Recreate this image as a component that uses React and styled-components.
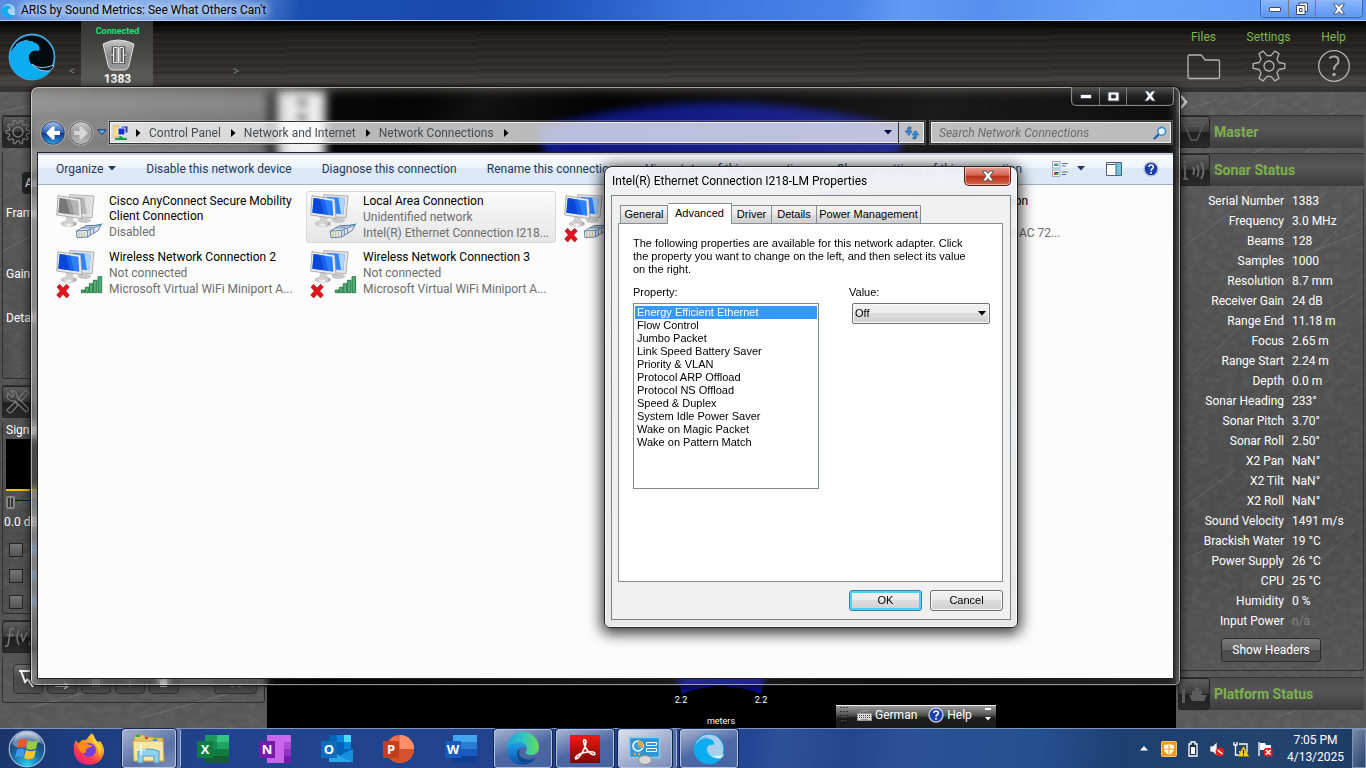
import React from "react";
import styled, { createGlobalStyle, css } from "styled-components";

const UI = `Roboto, "Open Sans", sans-serif`;
const DLG = `"Liberation Sans", Arial, sans-serif`;

const Global = createGlobalStyle`
  *, *::before, *::after { box-sizing: border-box; }
  body { margin: 0; font-family: ${UI}; font-size: 12px; line-height: 16px; color: #000; overflow: hidden; }
  button, input, select { font: inherit; color: inherit; margin: 0; }
  button { padding: 0; border: 0; background: none; }
  svg { display: block; flex: none; }
`;

const Desktop = styled.div`
  position: relative;
  height: 100vh;
  display: flex;
  flex-direction: column;
  background: #000;
  overflow: hidden;
`;

/* ---------- main application ---------- */

const TitleBar = styled.header`
  display: flex;
  justify-content: space-between;
  height: 21px;
  flex: none;
  padding-left: 1px;
  border-bottom: 1px solid #b4cdf5;
  background: linear-gradient(100deg, #5a8ade 0, #85ace8 10%, #6a96e0 17%, #1c4fb2 22%, #1a49ad 35%, #2258bf 42%, #3b74dc 50%, #4a84e8 62%, #6199f5 66%, #568fef 72%, #66a1fa 82%, #5c96f5 100%);
`;
const TitleText = styled.h1`
  display: flex;
  align-items: center;
  gap: 5px;
  margin: 0;
  font-size: 12px;
  font-weight: 400;
  text-shadow: 0 0 6px #cfe0fb, 0 0 8px #cfe0fb, 0 0 10px #cfe0fb, 0 0 12px #b5cdf6;
`;
const Caption = styled.div`
  display: flex;
  height: ${(p) => (p.$dark ? 19 : 18)}px;
  margin-right: ${(p) => (p.$dark ? 0 : 3)}px;
  border: 1px solid ${(p) => (p.$dark ? "#8b8b8b" : "#3765ae")};
  border-top: 0;
  border-radius: 0 0 5px 5px;
  box-shadow: inset 0 0 1px ${(p) => (p.$dark ? "#999" : "#d8e8ff")};
  background: ${(p) => (p.$dark ? "linear-gradient(#555, #222 50%, #111)" : "linear-gradient(#8ab6fb, #5d97f3)")};
`;
const CaptionButton = styled.button`
  display: grid;
  place-items: center;
  width: ${(p) => (p.$wide ? 47 : 27)}px;
  & + & { border-left: 1px solid ${(p) => (p.$dark ? "#777" : "#a5c6fa")}; }
`;

const AppHeader = styled.div`
  display: flex;
  justify-content: space-between;
  height: 71px;
  flex: none;
  background:
    repeating-linear-gradient(179.7deg, rgba(255,255,255,.035) 0 1px, transparent 1px 3px, rgba(0,0,0,.15) 3px 4px, transparent 4px 7px),
    linear-gradient(#000 0, #22211f 22%, #2c2b28 50%, #33322f 72%, #484742 84%, #3f3e3a 92%, #2e2d2a 100%);
`;
const HeaderLeft = styled.div`
  display: flex;
  padding-left: 8px;
`;
const LogoBox = styled.div`
  width: 48px;
  padding-top: 12px;
`;
const Arrow = styled.button`
  width: ${(p) => p.$w}px;
  padding-top: 43px;
  color: #777;
  font-size: 12px;
  line-height: 14px;
  text-align: right;
  align-self: flex-start;
  padding-right: 6px;
`;
const DeviceTile = styled.button`
  display: flex;
  flex-direction: column;
  align-items: center;
  width: 72px;
  height: 65px;
  padding: 4px 0 0 1px;
  background: linear-gradient(#333 0, #4d4d4b 60%, #62625f 100%);
  color: #fff;
  font-weight: 700;
  line-height: 14px;
`;
const Connected = styled.span`
  color: #1ee070;
  font-size: 9px;
  line-height: 13px;
`;
const HeaderMenu = styled.nav`
  display: flex;
  padding-top: 8px;
`;
const MenuEntry = styled.button`
  display: flex;
  flex-direction: column;
  align-items: center;
  align-self: flex-start;
  gap: 5px;
  width: 65px;
  color: #7fb64c;
`;

const AppBody = styled.div`
  display: flex;
  flex: 1;
  min-height: 0;
  overflow: hidden;
`;
const SidePanel = styled.aside`
  position: relative;
  width: ${(p) => p.$w}px;
  flex: none;
  padding: 23px 2px 0;
  color: #fff;
  background: linear-gradient(#5a5a5a, #505050 40%, #4c4c4c 70%, #585858);
`;
const Texture = styled.svg`
  position: absolute;
  inset: 0;
  width: 100%;
  height: 100%;
`;
const Expander = styled.button`
  position: absolute;
  left: 4px;
  top: 3px;
`;
const SectionBar = styled.button`
  position: relative;
  display: flex;
  align-items: center;
  gap: 4px;
  width: 100%;
  height: 33px;
  border-top: 1px solid #333;
  background: linear-gradient(#4c4c4c, #565656 40%, #3c3c3c);
  color: #7fb04f;
  font-size: 14px;
  font-weight: 700;
`;
const SectionIcon = styled.span`
  display: grid;
  place-items: center;
  width: 32px;
  height: 32px;
  border: 1px solid #222;
  border-radius: 3px;
  background: linear-gradient(#5d5d5d, #3c3c3c 48%, #1f1f1f 52%, #2b2b2b);
`;
const SectionBody = styled.div`
  position: relative;
  height: ${(p) => p.$h}px;
  margin: 3px 0 6px;
  padding: ${(p) => p.$pad || "0"};
  border: 1px solid #303030;
  border-top-color: transparent;
  border-radius: 3px;
  overflow: hidden;
`;
const StatusTable = styled.table`
  position: relative;
  width: 100%;
  border-collapse: collapse;
  th, td { height: 20px; padding: 0; line-height: 16px; font-weight: 400; white-space: nowrap; }
  th { width: 105px; text-align: right; }
  td { padding-left: 8px; color: #fff; }
  tr:last-child td { color: #858585; }
`;
const ShowHeaders = styled.button`
  display: block;
  width: 100px;
  height: 24px;
  margin: 7px 0 0 42px;
  border: 1px solid #2c2c2c;
  border-radius: 3px;
  background: linear-gradient(#7a7a7a, #626262 48%, #4b4b4b 52%, #505050);
`;
const SpacerBar = styled.div`
  height: ${(p) => p.$h}px;
`;

const FieldLabel = styled.label`
  display: block;
  padding: ${(p) => p.$pad};
  white-space: nowrap;
`;
const AutoButton = styled.button`
  display: block;
  width: 80px;
  height: 22px;
  margin: 20px 0 0 19px;
  padding-left: 3px;
  border-radius: 4px;
  background: #242424;
  text-align: left;
`;
const SignalPlot = styled.div`
  width: 248px;
  height: 52px;
  margin-left: 3px;
  border-bottom: 2px solid #e8c400;
  background: linear-gradient(90deg, #000, #222);
`;
const Threshold = styled.input`
  display: block;
  appearance: none;
  width: 248px;
  height: 14px;
  margin: 4px 0 4px 3px;
  background: linear-gradient(transparent 5px, #111 5px 6px, #2d5fc0 6px 7px, transparent 7px);
  &::-webkit-slider-thumb {
    appearance: none;
    width: 9px;
    height: 13px;
    border: 2px solid #858585;
    border-radius: 2px;
    background: linear-gradient(90deg, #333 2px, #999 2px 3px, #333 3px);
  }
`;
const CheckRow = styled.label`
  display: flex;
  align-items: center;
  gap: 7px;
  height: 26px;
  padding-left: 6px;
  color: #5fa8ff;
`;
const DarkCheck = styled.input`
  appearance: none;
  width: 14px;
  height: 14px;
  border: 1px solid #222;
  background: linear-gradient(#777, #555);
`;
const ToolRow = styled.div`
  display: flex;
  gap: 4px;
`;
const ToolButton = styled.button`
  display: grid;
  place-items: center;
  width: ${(p) => p.$w || 30}px;
  height: 30px;
  margin-left: ${(p) => p.$ml || 0}px;
  border: 1px solid #333;
  border-radius: 4px;
  background: linear-gradient(#6a6a6a, #4b4b4b 50%, #4f4f4f);
`;
const SonarView = styled.main`
  position: relative;
  flex: 1;
  min-width: 0;
  background: #000;
`;
const ViewTools = styled.div`
  display: flex;
  flex-direction: column;
  align-items: center;
  gap: 8px;
  width: 49px;
  height: 90px;
  margin-left: 10px;
  padding-top: 7px;
  background: linear-gradient(90deg, #bcbcbc, #efefef 30%, #efefef 80%, #bbb);
`;
const ToolDot = styled.button`
  width: 10px;
  height: 7px;
  border-radius: 4px;
  background: #444;
`;
const SonarChart = styled.svg`
  position: absolute;
  left: 0;
  top: 0;
  width: 100%;
  height: 100%;
`;

/* ---------- explorer window ---------- */

const ExplorerWindow = styled.section`
  position: absolute;
  left: 30px;
  right: 185px;
  top: 86px;
  bottom: 82px;
  display: flex;
  flex-direction: column;
  padding: 0 6px 6px;
  border: 1px solid #161616;
  border-radius: 8px 8px 6px 6px;
  box-shadow: inset 0 0 0 1px rgba(255,255,255,.55), 0 0 8px 1px rgba(0,0,0,.6);
  backdrop-filter: blur(4px);
  background: linear-gradient(115deg, rgba(255,255,255,.34) 0, rgba(255,255,255,.25) 17%, rgba(255,255,255,.03) 22%, rgba(255,255,255,.02) 28%, rgba(255,255,255,.07) 32%, rgba(255,255,255,.01) 40%, rgba(255,255,255,.1) 64%, rgba(255,255,255,.06) 80%, rgba(255,255,255,.14));
`;
const WindowTop = styled.div`
  display: flex;
  justify-content: flex-end;
  height: 34px;
`;
const AddressRow = styled.div`
  display: flex;
  align-items: center;
  height: 23px;
  margin-bottom: 8px;
  padding-left: 3px;
`;
const NavButton = styled.button`
  width: 28px;
  height: 26px;
`;
const NavMenu = styled.button`
  width: 12px;
  margin-right: 1px;
  padding-left: 1px;
`;
const Glass = css`
  display: flex;
  align-items: center;
  height: 23px;
  border: 1px solid #333;
  box-shadow: inset 0 0 0 1px rgba(255,255,255,.75), 0 0 0 1px rgba(255,255,255,.25);
  background: rgba(255,255,255,.72);
`;
const AddressBox = styled.div`
  ${Glass}
  flex: 1;
  min-width: 0;
  padding-left: 3px;
  color: #454c52;
  svg + svg { margin-left: 7px; }
`;
const Crumb = styled.a`
  margin: 0 10px 0 8px;
  color: inherit;
  text-decoration: none;
  white-space: nowrap;
`;
const AddressEnd = styled.span`
  display: flex;
  align-items: center;
  gap: 6px;
  margin-left: auto;
`;
const Refresh = styled.button`
  display: grid;
  place-items: center;
  width: 26px;
  height: 21px;
  border-left: 1px solid #333;
`;
const SearchBox = styled.label`
  ${Glass}
  width: 242px;
  margin-left: 5px;
  margin-right: 2px;
  padding: 0 4px 0 8px;
`;
const SearchInput = styled.input`
  flex: 1;
  min-width: 0;
  padding: 0;
  border: 0;
  outline: 0;
  background: none;
  font-style: italic;
  &::placeholder { color: #6b6b6b; opacity: 1; }
`;
const Client = styled.div`
  flex: 1;
  display: flex;
  flex-direction: column;
  min-height: 0;
  border: 1px solid #222;
  background: #fcfcfc;
`;
const Toolbar = styled.div`
  display: flex;
  align-items: center;
  gap: 30px;
  height: 32px;
  flex: none;
  padding: 0 15px 0 18px;
  border-bottom: 1px solid #a0afc3;
  background: linear-gradient(#fafcff 0, #eef4fc 48%, #dce8f6 50%, #dde9f7 100%);
  box-shadow: inset 0 2px 0 #c5c9dd;
  color: #1e395b;
`;
const ToolbarButton = styled.button`
  display: flex;
  align-items: center;
  gap: ${(p) => p.$gap || 5}px;
  white-space: nowrap;
`;
const ToolbarIcons = styled.div`
  display: flex;
  align-items: center;
  gap: 21px;
  margin-left: auto;
`;
const ItemGrid = styled.div`
  display: grid;
  grid-template-columns: repeat(auto-fill, 250px);
  gap: 4px;
  padding: 6px 0 0 14px;
`;
const Item = styled.div`
  display: flex;
  gap: 4px;
  height: 52px;
  padding: 1px 2px 0 2px;
  border: 1px solid ${(p) => (p.$selected ? "#d9d9d9" : "transparent")};
  border-radius: 3px;
  background: ${(p) => (p.$selected ? "linear-gradient(#fafafa, #e6e6e6)" : "none")};
`;
const ItemText = styled.div`
  min-width: 0;
  padding-top: 1px;
  color: #6d6d6d;
  p { min-height: 16px; margin: 0; white-space: nowrap; }
`;
const ItemName = styled.div`
  color: #000;
  line-height: 15px;
`;

/* ---------- properties dialog ---------- */

const Dialog = styled.section`
  position: absolute;
  left: 604px;
  top: 166px;
  width: 414px;
  padding: 0 6px 7px;
  border: 1px solid #222;
  border-radius: 8px 8px 6px 6px;
  background: linear-gradient(rgba(245,247,250,.86), rgba(235,237,240,.8) 30px, rgba(228,228,228,.85));
  backdrop-filter: blur(5px);
  box-shadow: inset 0 0 0 1px rgba(255,255,255,.85), 0 3px 14px 3px rgba(0,0,0,.75);
`;
const DialogTitle = styled.div`
  display: flex;
  justify-content: space-between;
  height: 28px;
  h2 { margin: 0; padding: 6px 0 0 1px; font-size: 12px; font-weight: 400; line-height: 16px; }
`;
const CloseButton = styled.button`
  display: grid;
  place-items: center;
  width: 47px;
  height: 19px;
  border: 1px solid #5a1a14;
  border-top: 0;
  border-radius: 0 0 5px 5px;
  box-shadow: inset 0 0 0 1px rgba(255,255,255,.45);
  background: linear-gradient(#e9a399, #d4604f 46%, #b9301c 50%, #cf5a3e 90%, #e08a62);
`;
const DialogClient = styled.div`
  padding: 7px 7px 8px 6px;
  border: 1px solid #808080;
  background: #f0f0f0;
  font-family: ${DLG};
  font-size: 11px;
  line-height: 13px;
`;
const Tabs = styled.div`
  display: flex;
  align-items: flex-end;
  padding-left: 2px;
`;
const Tab = styled.button`
  height: ${(p) => (p.$active ? 21 : 18)}px;
  width: ${(p) => p.$w}px;
  margin-bottom: ${(p) => (p.$active ? -1 : 0)}px;
  padding-bottom: ${(p) => (p.$active ? 2 : 0)}px;
  position: relative;
  border: 1px solid #898c95;
  border-bottom: 0;
  background: ${(p) => (p.$active ? "#fff" : "linear-gradient(#f2f2f2, #ebebeb 50%, #ddd 52%, #d0d0d0)")};
  white-space: nowrap;
  & + & { border-left-width: ${(p) => (p.$active ? 1 : 0)}px; }
`;
const TabPage = styled.div`
  height: 359px;
  padding: 13px 11px 0 14px;
  border: 1px solid #898c95;
  background: #fff;
  p { width: 344px; margin: 0 0 10px; }
`;
const Columns = styled.div`
  display: flex;
  gap: 30px;
`;
const Field = styled.div`
  display: flex;
  flex-direction: column;
  gap: 4px;
  width: ${(p) => p.$w}px;
`;
const PropertyList = styled.select`
  width: 186px;
  height: 186px;
  padding: 2px 1px 1px;
  border: 1px solid #828790;
  border-radius: 0;
  outline: 0;
  background: #fff;
  overflow: hidden;
  font-size: 11px;
  option { height: 13px; min-height: 13px; padding: 0 2px; line-height: 13px; color: #000; }
  option:checked { background: linear-gradient(#39f, #39f); color: #fff; }
`;
const Combo = styled.div`
  display: grid;
  align-items: center;
  margin-left: 3px;
  & > * { grid-area: 1 / 1; }
  svg { justify-self: end; margin-right: 4px; pointer-events: none; }
`;
const ComboSelect = styled.select`
  appearance: none;
  width: 138px;
  height: 21px;
  padding: 0 2px;
  border: 1px solid #707070;
  border-radius: 2px;
  box-shadow: inset 0 0 0 1px #fafafa;
  background: linear-gradient(#f2f2f2, #ebebeb 48%, #ddd 50%, #cfcfcf);
`;
const DialogButtons = styled.div`
  display: flex;
  justify-content: flex-end;
  gap: 8px;
  margin-top: 8px;
`;
const PushButton = styled.button`
  width: 73px;
  height: 21px;
  border: 1px solid ${(p) => (p.$primary ? "#3c7fb1" : "#707070")};
  border-radius: 3px;
  box-shadow: inset 0 0 0 ${(p) => (p.$primary ? "2px #4fd0f6" : "1px #fafafa")};
  background: linear-gradient(#f2f2f2, #ebebeb 48%, #ddd 50%, #cfcfcf);
`;

/* ---------- language bar and task bar ---------- */

const LanguageBar = styled.div`
  position: absolute;
  right: 370px;
  bottom: 40px;
  display: flex;
  align-items: center;
  width: 160px;
  height: 23px;
  padding: 0 4px 4px;
  border-top: 1px solid #eee;
  background: linear-gradient(#999, #555 40%, #1e1e1e 55%, #1a1a1a);
  color: #fff;
`;
const LanguageButton = styled.button`
  display: flex;
  align-items: center;
  gap: 3px;
  margin-left: ${(p) => p.$ml}px;
`;
const Taskbar = styled.footer`
  display: flex;
  height: 40px;
  flex: none;
  border-top: 1px solid #8195b8;
  background: linear-gradient(100deg, #1b3568 0, #1d3c7c 5%, #21428c 15%, #22438e 52%, #234795 55%, #2d5199 57%, #24468f 62%, #2a5198 66%, #24508f 76%, #1d3f70 82%, #24446f 92%, #1c3a66 100%);
  color: #fff;
`;
const TaskButtons = styled.div`
  display: flex;
  gap: 4px;
  align-items: stretch;
`;
const StartButton = styled.button`
  width: 56px;
  padding-left: 8px;
`;
const TaskButton = styled.button`
  display: flex;
  align-items: center;
  justify-content: center;
  width: 58px;
  height: 39px;
  ${(p) => p.$open && css`
    border: 1px solid #b5c2dd;
    border-radius: 3px;
    box-shadow: 0 0 0 1px #14264d;
    background: linear-gradient(160deg, rgba(255,255,255,.6), rgba(255,255,255,.2) 50%, rgba(255,255,255,.16));
  `}
  ${(p) => p.$stacked && css`
    width: 54px;
    margin-right: 4px;
    background: linear-gradient(150deg, rgba(255,255,255,${p.$active ? ".85" : ".6"}), rgba(255,255,255,${p.$active ? ".55" : ".25"}) 60%, rgba(255,255,255,.4));
    box-shadow: 0 0 0 1px #14264d, 4px 0 0 0 #5570a8, 5px 0 0 0 #a9b7d4;
  `}
`;
const Tray = styled.div`
  display: flex;
  align-items: center;
  margin-left: auto;
`;
const TrayIcons = styled.div`
  display: flex;
  align-items: center;
  gap: 8px;
  margin-right: 6px;
`;
const TrayToggle = styled.button`
  padding-right: 5px;
`;
const Clock = styled.time`
  width: 73px;
  text-align: center;
  line-height: 17px;
  padding-top: 1px;
`;
const ShowDesktop = styled.button`
  width: 14px;
  height: 39px;
  border: 1px solid #7e93ba;
  background: linear-gradient(120deg, rgba(255,255,255,.4), rgba(255,255,255,.05));
`;

/* ---------- drawings ---------- */

const WaveLogo = ({ size, pale }) => (
  <svg width={size} height={size} viewBox="0 0 48 48">
    <circle cx="24" cy="24" r="22.5" fill={pale ? "#a9cfee" : "#050a10"} stroke={pale ? "#1590d8" : "#3fa7dd"} strokeWidth="1.8" />
    <path d="M2 21C6 11 17 7 25 9C30 10 33 14 31 18C25 16 20 20 21 26C22 33 31 37 45 34C42 42 32 47 23 46C10 45 0 35 2 21Z" fill="#0badf0" />
    <path d="M24 31C30 36 38 35 46 32C45 35 43 38 40 38C33 38 28 36 24 31Z" fill={pale ? "#e6f6ff" : "#071018"} stroke="#9adcf8" strokeWidth=".9" />
    <path d="M5 17C10 9 18 7 25 9M8 12C13 8 17 8 20 7" stroke="#35a8e3" strokeWidth="1.200" fill="none" />
  </svg>
);
const Min = ({ s = "#444a58" }) => <svg width="14" height="8" viewBox="0 0 14 8"><rect x="1.5" y="2.5" width="11" height="4" rx=".5" fill="#fff" stroke={s} /></svg>;
const Max = ({ s = "#444a58" }) => <svg width="13" height="11" viewBox="0 0 13 11"><path d="M1 1H12V10H1ZM4.500 4V7H8.500V4Z" fill="#fff" fillRule="evenodd" stroke={s} /></svg>;
const Restore = () => (
  <svg width="14" height="14" viewBox="0 0 14 14">
    <path d="M4 1H12.500V9.500H4Z" fill="#fff" stroke="#3c4a60" />
    <path d="M1.500 3.500H10V12.500H1.500ZM4.500 6.500V9.500H7V6.500Z" fill="#fff" fillRule="evenodd" stroke="#3c4a60" />
  </svg>
);
const Cross = ({ s = "#444a58" }) => <svg width="14" height="12" viewBox="0 0 14 12"><path d="M1.500 1H5L7 3.500 9 1H12.500L9 6 12.500 11H9L7 8.500 5 11H1.500L5 6Z" fill="#fff" stroke={s} strokeWidth=".9" /></svg>;
const Down = ({ fill = "#1e395b", w = 8, h = 5 }) => <svg width={w} height={h} viewBox="0 0 8 5"><path d="M0 0H8L4 4.500Z" fill={fill} /></svg>;
const Right = () => <svg width="5" height="8" viewBox="0 0 5 8"><path d="M0 0 4.500 4 0 8Z" fill="#000" /></svg>;

const DeviceIcon = () => (
  <svg width="36" height="34" viewBox="0 0 36 34">
    <defs><linearGradient id="dev" x2="0" y2="1"><stop stopColor="#c8c8c8" /><stop offset=".5" stopColor="#8a8a8a" /><stop offset="1" stopColor="#999" /></linearGradient></defs>
    <path d="M3 6Q18 -2 34 6L29 27Q28 32 24 32H13Q9 32 8 27Z" fill="url(#dev)" stroke="#ddd" />
    <path d="M13 9.500H16.500V24.500H13ZM20.500 9.500H24V24.500H20.500ZM16.500 11V23M20.500 11V23M10 17H13M24 17H27" fill="none" stroke="#555" strokeWidth="2.600" />
    <path d="M13.500 9.500H17V24.500H13.500ZM20 9.500H23.500V24.500H20ZM18.500 9V25M10 17H13.500M23.500 17H27" fill="none" stroke="#eee" strokeWidth="1" />
  </svg>
);
const gearPath = (cx, cy, n, rOut, rIn, tip, root) => {
  const pts = [];
  for (let i = 0; i < n; i++) {
    const a = (i * 2 * Math.PI) / n;
    [[-root, rIn], [-tip, rOut], [tip, rOut], [root, rIn]].forEach(([d, r]) => {
      pts.push(`${(cx + r * Math.cos(a + d)).toFixed(1)} ${(cy + r * Math.sin(a + d)).toFixed(1)}`);
    });
  }
  return `M${pts.join("L")}Z`;
};
const FolderOutline = () => <svg width="34" height="32" viewBox="0 0 34 32"><path d="M2 5Q1 5 1 7V26Q1 28.500 2.500 28.500H31Q32.500 28.500 32.500 27V11Q32.500 10 31 10H18L15 6Q14.500 5 13 5Z" fill="none" stroke="#b4b4b0" strokeWidth="1.300" /></svg>;
const GearOutline = () => <svg width="34" height="32" viewBox="0 0 34 32"><path d={gearPath(17, 16, 6, 16, 10.500, 0.15, 0.34)} fill="none" stroke="#b4b4b0" strokeWidth="1.300" strokeLinejoin="round" /><circle cx="17" cy="16" r="5" fill="none" stroke="#b4b4b0" strokeWidth="1.300" /></svg>;
const HelpOutline = () => <svg width="32" height="32" viewBox="0 0 32 32"><circle cx="16" cy="16" r="15.300" fill="none" stroke="#b4b4b0" strokeWidth="1.300" /><path d="M11.500 8.500Q12.500 6.500 16 6.500Q20.500 6.500 20.500 11Q20.500 13.500 18 15Q16 16.500 16 20" fill="none" stroke="#a8a8a4" strokeWidth="2" /><circle cx="16" cy="24.500" r="1.800" fill="#a8a8a4" /></svg>;

const Scratches = () => (
  <Texture preserveAspectRatio="none" viewBox="0 0 190 640" aria-hidden="true">
    <filter id="grain"><feTurbulence type="fractalNoise" baseFrequency=".12 .16" numOctaves="4" seed="4" /><feColorMatrix values="0 0 0 0 1 0 0 0 0 1 0 0 0 0 1 .9 0 0 0 -.32" /></filter>
    <rect width="190" height="640" filter="url(#grain)" opacity=".13" />
    <path d="M0 20L40 8M5 60L90 6M20 90L160 20M60 110L110 60M2 160L70 110M30 220L150 100M10 290L180 120M90 180L186 140M120 240L185 200M60 330L170 250M5 420L60 380M10 470L90 430M110 500L180 440M130 60L178 34M150 75L180 80M20 620L100 590M100 630L186 596" stroke="#fff" strokeWidth=".7" opacity=".17" fill="none" />
  </Texture>
);
const FilterIcon = () => <svg width="26" height="22" viewBox="0 0 26 22"><path d="M3 2H23L16 19H10ZM4.500 5H21.500" fill="none" stroke="#5c5c5c" strokeWidth="1.500" /></svg>;
const SignalIcon = () => <svg width="26" height="22" viewBox="0 0 26 22"><path d="M4 7V20M2 7H5M2 20H7M12 8Q14 12 12 16M16 6Q19 12 16 18M20 3Q25 12 20 20" fill="none" stroke="#6a6a6a" strokeWidth="2" /><circle cx="4" cy="3" r="1.500" fill="#6a6a6a" /></svg>;
const ShipIcon = () => <svg width="28" height="22" viewBox="0 0 28 22"><circle cx="4" cy="2" r="1.800" fill="#5c5c5c" /><path d="M2 6H5V20H2ZM9 12H27L24 18H12ZM12 8H22V12H12ZM15 5H19V8H15ZM16.500 2H17.500V5H16.500Z" fill="#5c5c5c" /></svg>;
const SmallGear = () => <svg width="26" height="26" viewBox="0 0 26 26"><path d={gearPath(13, 13, 10, 12, 9, 0.1, 0.2)} fill="none" stroke="#777" strokeWidth="1.300" /><circle cx="13" cy="13" r="5" fill="none" stroke="#777" strokeWidth="1.500" /></svg>;
const WrenchIcon = () => <svg width="26" height="26" viewBox="0 0 26 26"><path d="M3 4L7 8 9 6 6 2Q11 1 12 6V8L23 19Q24 22 21 23L10 12Q5 13 2 8ZM21 1L24 4 16 12 13 10ZM10 13L13 16 7 23Q4 25 2 21Z" fill="none" stroke="#777" strokeWidth="1.300" /></svg>;
const FnIcon = () => <svg width="28" height="24" viewBox="0 0 28 24"><path d="M10 4Q6 2 6 8L4 20Q3 22 1 21M3 10H10M15 5Q11 12 15 20M17 9L19 16 23 8H24M25 4Q29 12 25 20" fill="none" stroke="#777" strokeWidth="1.500" /></svg>;

const Sonar = () => (
  <SonarChart viewBox="0 0 909 636" preserveAspectRatio="xMidYMin meet">
    <path d="M271 36Q454 -14 638 36L494 602Q454 586 415 602Z" fill="#0a1380" />
    <path d="M415 602Q454 586 494 602L492 590H417Z" fill="#0b0f8c" />
    <g fill="#fff" fontFamily={UI} fontSize="9" textAnchor="middle">
      <text x="414" y="611">2.2</text>
      <text x="494" y="611">2.2</text>
      <text x="454" y="632">meters</text>
    </g>
  </SonarChart>
);

const BackIcon = () => (
  <svg width="26" height="26" viewBox="0 0 26 26">
    <defs><linearGradient id="bk" x2="0" y2="1"><stop stopColor="#a9c4ea" /><stop offset=".48" stopColor="#2c5cb4" /><stop offset=".5" stopColor="#0d3486" /><stop offset="1" stopColor="#31a0e8" /></linearGradient></defs>
    <circle cx="13" cy="13" r="11.500" fill="url(#bk)" stroke="#2b3d63" />
    <circle cx="13" cy="13" r="12.300" fill="none" stroke="#ccc" strokeWidth=".6" />
    <path d="M6 13L12.500 6.500H14.500V11H20V15H14.500V19.500H12.500Z" fill="#fff" />
  </svg>
);
const ForwardIcon = () => (
  <svg width="26" height="26" viewBox="0 0 26 26">
    <defs><linearGradient id="fw" x2="0" y2="1"><stop stopColor="#ccc" /><stop offset=".5" stopColor="#999" /><stop offset="1" stopColor="#bbb" /></linearGradient></defs>
    <circle cx="13" cy="13" r="11.500" fill="url(#fw)" stroke="#555" />
    <circle cx="13" cy="13" r="12.300" fill="none" stroke="#ccc" strokeWidth=".6" />
    <path d="M20 13L13.500 6.500H11.500V11H6V15H11.500V19.500H13.500Z" fill="#d5d5d5" />
  </svg>
);
const RecentIcon = () => <svg width="10" height="7" viewBox="0 0 10 7"><path d="M.8.8H9.200L5 5.800Z" fill="#5ab0f0" stroke="#17375f" strokeWidth="1" /></svg>;
const NetFolderIcon = () => (
  <svg width="16" height="16" viewBox="0 0 16 16">
    <path d="M0 1H6V12H0Z" fill="#f2dd86" stroke="#c9a83c" strokeWidth=".6" />
    <path d="M8 1H15V8H8Z" fill="#2438b8" stroke="#dde" /><path d="M5 3H12V10H5Z" fill="#1b2cd0" stroke="#eef" />
    <path d="M7.500 11V13M2 14H14M6 13H10" stroke="#1e9e55" strokeWidth="2" />
  </svg>
);
const RefreshIcon = () => <svg width="16" height="16" viewBox="0 0 16 16"><path d="M7 2H5Q3.500 2 3.500 4V6H1L5 10.500 8 6H6V4H7Z" fill="#3c86cf" stroke="#1c5ba0" strokeWidth=".6" /><path d="M9 14H11Q12.500 14 12.500 12V10H15L11.500 5.500 8 10H10.500V12H9Z" fill="#3c86cf" stroke="#1c5ba0" strokeWidth=".6" /></svg>;
const SearchIcon = () => <svg width="14" height="14" viewBox="0 0 14 14"><path d="M6 8L1.500 12.500" stroke="#2d5fb0" strokeWidth="2.400" strokeLinecap="round" /><circle cx="8.700" cy="5.300" r="3.900" fill="#e8f6ff" stroke="#3a8cd0" strokeWidth="1.600" /></svg>;
const ViewIcon = () => (
  <svg width="16" height="16" viewBox="0 0 16 16">
    <path d="M.5.5H8V7H.5ZM.5 9H8V15.500H.5Z" fill="#fff" stroke="#9aa7b8" />
    <path d="M2 2.500H6.500V5H2Z" fill="#4a9a9a" /><path d="M2 11H4V14H2Z" fill="#d33" /><path d="M4 11H6.500V14H4Z" fill="#37a537" /><path d="M4 11H6.500V12H4Z" fill="#33c" />
    <path d="M10 2.500H16M10 5H14M10 11H16M10 13.500H14" stroke="#5a6e88" />
  </svg>
);
const PaneIcon = () => <svg width="16" height="14" viewBox="0 0 16 14"><path d="M.5.5H15.500V13.500H.5Z" fill="#fff" stroke="#4c6378" /><path d="M10 1H15V13H10Z" fill="#6fc3dd" /><path d="M1 2.500H9M10 1V13" stroke="#4c6378" fill="none" /></svg>;
const HelpBall = ({ size = 16 }) => (
  <svg width={size} height={size} viewBox="0 0 16 16">
    <circle cx="8" cy="8" r="7" fill="#1c3fae" stroke="#bcc6da" strokeWidth="1.400" />
    <path d="M5.800 6Q6 4 8 4Q10.300 4 10.300 6Q10.300 7.200 9 8Q8 8.600 8 9.800" fill="none" stroke="#fff" strokeWidth="1.500" />
    <circle cx="8" cy="11.800" r="1" fill="#fff" />
  </svg>
);

const NetworkIcon = ({ off, failed, wifi }) => {
  const a = off ? "#777" : "#0a46d8";
  const b = off ? "#b5b5b5" : "#2f80ff";
  const c = off ? "#ddd" : "#a9d4ff";
  return (
    <svg width="50" height="50" viewBox="0 0 150 150">
      <defs>
        <linearGradient id={`st${off ? 1 : 0}`} x2="1"><stop stopColor="#bbb" /><stop offset=".5" stopColor="#fafafa" /><stop offset="1" stopColor="#999" /></linearGradient>
      </defs>
      <ellipse cx="88" cy="82" rx="20" ry="8" fill="#c8c8c8" />
      <path d="M44 5L117 9 111 74 50 70Z" fill="#e6e6e2" stroke="#8d8d8d" strokeWidth="2" />
      <path d="M52 11L108 15 103 64 80 62Z" fill={b} /><path d="M88 14L108 15 103 64 96 64Z" fill={c} />
      <ellipse cx="42" cy="92" rx="23" ry="9" fill={`url(#st${off ? 1 : 0})`} stroke="#aaa" />
      <path d="M34 70H54L56 92H30Z" fill="#cfcfcf" />
      <path d="M9 8L77 18 81 77 5 66Z" fill="#eceae4" stroke="#8d8d8d" strokeWidth="2" />
      <path d="M14 15L70 23 73 68 10 59Z" fill={b} />
      <path d="M14 15L34 18 46 64 10 59Z" fill={a} /><path d="M34 18L46 20 58 66 46 64Z" fill={off ? "#999" : "#1a62ec"} />
      {wifi ? (
        <g fill="#4fae74" stroke="#1f6e3d" strokeWidth="2.500">
          <path d="M79 123H89V131H79ZM91 115H101V131H91ZM103 104H113V131H103ZM115 94H126V131H115ZM129 83H140V131H129Z" />
        </g>
      ) : (
        <g stroke="#56708f" strokeWidth="2.500">
          <path d="M112 98L144 91 128 112 118 112Z" fill="#39b9dd" stroke="none" />
          <path d="M64 114L92 98 122 97 138 94 130 112 98 132 66 134Z" fill="#dce8f6" />
          <path d="M64 114L98 112 98 132M98 112L136 96M80 105L112 104M92 99L124 98M106 110V126M116 106V120" fill="none" />
          <path d="M72 118V132M80 118V132M88 117V131" stroke="#d4b84a" />
        </g>
      )}
      {failed && <path d="M6 114L14 106 24 117 35 106 43 114 32 126 43 138 35 147 24 136 14 147 5 138 16 126Z" fill="#e0141c" stroke="#a50a10" strokeWidth="2" />}
    </svg>
  );
};

const StartOrb = () => (
  <svg width="38" height="38" viewBox="0 0 38 38">
    <defs>
      <radialGradient id="orb" cx=".5" cy=".95" r=".9"><stop stopColor="#29d3f2" /><stop offset=".4" stopColor="#1976b4" /><stop offset=".8" stopColor="#1a4478" /><stop offset="1" stopColor="#a9bdd4" /></radialGradient>
    </defs>
    <circle cx="19" cy="19" r="17.800" fill="url(#orb)" stroke="#9fb9d6" strokeWidth="1.200" />
    <path d="M4 14Q8 3 19 2Q30 3 34 14Q26 9 18 16Q10 20 4 14Z" fill="#fff" opacity=".35" />
    <path d="M11 10Q15 8 19 10L17 18Q13 16 8.500 18Z" fill="#f0582a" />
    <path d="M20 10.500Q25 13 30 10.500L28 18.500Q23 21 18 18.500Z" fill="#9ccb3b" />
    <path d="M9 19.500Q14 17.500 17 19.500L15 27.500Q11 25.500 7 27.500Z" fill="#3d9ae8" />
    <path d="M18 20Q23 22.500 28 20L26 28Q20 30.500 16 28Z" fill="#fcc72c" />
  </svg>
);
const Firefox = () => (
  <svg width="32" height="32" viewBox="0 0 32 32">
    <defs><linearGradient id="ff" x1=".8" y1="0" x2=".2" y2="1"><stop stopColor="#ffe14a" /><stop offset=".4" stopColor="#ff9a1f" /><stop offset=".7" stopColor="#ff3b4e" /><stop offset="1" stopColor="#e3178c" /></linearGradient></defs>
    <path d="M3 7Q4 10 6 10Q9 6 13 7Q15 4 19 0Q20 5 25 9L27 8Q31 13 31 18A15 14 0 0 1 1 18Q0 12 3 7Z" fill="url(#ff)" />
    <circle cx="16" cy="17" r="7" fill="#7540d8" />
    <path d="M6 10Q12 8 16 12H19Q19 14 15 15Q12 16 13 19Q10 22 7 18Q4 14 6 10Z" fill="#ff8a16" />
    <path d="M20 1Q22 7 26 11Q30 17 26 23Q27 14 21 10Q18 6 20 1Z" fill="#ffd83a" />
  </svg>
);
const ExplorerIcon = () => (
  <svg width="34" height="32" viewBox="0 0 34 32">
    <path d="M2 5L4 2H12L13 4H20L22 5H31V28H2Z" fill="#e4c765" stroke="#b89537" />
    <path d="M1 8H31L32 28H2Z" fill="#f6e6a2" stroke="#c9a84e" />
    <path d="M4 2H8V4H4Z" fill="#2fb040" /><path d="M13 4H16V6H13Z" fill="#dd4035" /><path d="M21 6H25V8H21Z" fill="#3b9ae0" />
    <path d="M6 18Q16 14 27 18V30H22V23H11V30H6Z" fill="#8fd2f0" stroke="#4d9cc8" />
    <path d="M9 11V22M4 17H14" stroke="#fff" strokeWidth="1.200" />
  </svg>
);
const LetterBadge = styled.text.attrs({ x: 9, y: 20, textAnchor: "middle", fill: "#fff", fontFamily: "Open Sans, sans-serif", fontWeight: 700, fontSize: 13 })``;
const OfficeIcon = ({ letter, dark, c }) => (
  <svg width="34" height="30" viewBox="0 0 34 30">
    {letter === "P" ? (
      <g><circle cx="18" cy="15" r="14" fill={c[0]} /><path d="M18 1A14 14 0 0 1 32 15H18Z" fill={c[1]} /><path d="M4 15A14 14 0 0 0 32 15Z" fill={c[2]} /></g>
    ) : letter === "O" ? (
      <g><path d="M9 1H31V20H9Z" fill={c[0]} /><path d="M17 1H24V8H17Z" fill={c[1]} /><path d="M24 1H31V8H24Z" fill="#50d9ff" /><path d="M24 8H31V15H24Z" fill={c[1]} /><path d="M9 16L33 28H9Z" fill="#28a8ea" /><path d="M33 15V28L18 22Z" fill="#1490df" /></g>
    ) : letter === "N" ? (
      <g><path d="M9 1H33V29H9Z" fill={c[0]} /><path d="M26 1H33V8H26Z" fill="#ca64ea" /><path d="M26 8H33V15H26Z" fill="#ae4bd5" /><path d="M26 15H33V22H26Z" fill="#9332bf" /><path d="M26 22H33V29H26Z" fill="#7719aa" /></g>
    ) : (
      <g><path d="M9 1H33V8H9Z" fill={c[0]} /><path d="M9 8H33V15H9Z" fill={c[1]} /><path d="M9 15H33V22H9Z" fill={c[2]} /><path d="M9 22H33V29H9Z" fill={c[3]} />{letter === "X" && <path d="M9 1H21V22H9Z" fill="#107c41" opacity=".6" />}</g>
    )}
    <path d="M1 7H17V24H1Z" fill={dark} />
    <LetterBadge>{letter}</LetterBadge>
  </svg>
);
const EdgeIcon = () => (
  <svg width="34" height="34" viewBox="0 0 34 34">
    <defs>
      <linearGradient id="eg" x2="1"><stop stopColor="#1ca4e0" /><stop offset=".5" stopColor="#2cc6c0" /><stop offset="1" stopColor="#68dc58" /></linearGradient>
      <linearGradient id="eb" x2="0" y2="1"><stop stopColor="#1fa0e8" /><stop offset="1" stopColor="#0c4fa8" /></linearGradient>
    </defs>
    <path d="M1 17A16 16 0 0 1 33 15Q33 23 25 23Q19 23 19.500 20Q22 18 20 14Q16 9 9 11Q3 13 1 17Z" fill="url(#eg)" />
    <path d="M1 18Q3 11 11 11Q19 11 20.500 16Q15 13 13 19Q12 25 19 27Q25 29 30 25Q25 33 16 33Q2 32 1 18Z" fill="url(#eb)" />
    <path d="M13 19Q12 25 19 27Q25 29 30 25Q27 31 20 32Q11 31 11 22Q11 18 15 15.500Q13 17 13 19Z" fill="#114a8b" />
  </svg>
);
const AcrobatIcon = () => (
  <svg width="30" height="28" viewBox="0 0 30 28">
    <defs><linearGradient id="ac" x2="0" y2="1"><stop stopColor="#f01a12" /><stop offset="1" stopColor="#7e0606" /></linearGradient></defs>
    <path d="M0 0H30V28H0Z" fill="url(#ac)" />
    <path d="M14 5Q17 4 15.500 10Q13 18 8 23Q5 25 5.500 22.500Q8 18 18 17Q25 16 25 19Q24 21 20 18Q15 14 14 8Q13 5.500 14 5Z" fill="none" stroke="#fff" strokeWidth="1.600" />
  </svg>
);
const ControlPanelIcon = () => (
  <svg width="34" height="32" viewBox="0 0 34 32">
    <path d="M1.500 4.500H31.500V24.500H1.500Z" fill="#2f96d4" stroke="#8ccbee" strokeWidth="1.500" />
    <circle cx="10" cy="13" r="5" fill="#3a9ed8" stroke="#fff" strokeWidth="1.500" /><path d="M10 13V7A6 6 0 0 1 15 15Z" fill="#f0a03c" />
    <path d="M18.500 9.500H28.500V12.500H18.500ZM18.500 15.500H28.500V18.500H18.500Z" fill="none" stroke="#fff" /><circle cx="7" cy="21" r="1.200" fill="#f0a03c" /><circle cx="11" cy="21" r="1.200" fill="#f0a03c" />
    <ellipse cx="17" cy="27" rx="6.500" ry="4.500" fill="#d8d8d8" stroke="#888" />
  </svg>
);

const KeyboardIcon = () => <svg width="15" height="14" viewBox="0 0 15 14"><path d="M.5 5.500H14.500V12.500H.5Z" fill="#ddd" stroke="#999" /><path d="M2 7.500H13M2 9.500H13" stroke="#444" strokeDasharray="1 1" /><path d="M4 11.500H11M3 5Q4 2 8 3Q11 4 12 1" stroke="#999" fill="none" /></svg>;
const GripIcon = () => <svg width="8" height="17" viewBox="0 0 8 17"><path d="M1 0V17M4 0V17M7 0V17" stroke="#000" strokeDasharray="1 3" strokeWidth="1" /><path d="M2 9V17M5 9V17" stroke="#777" strokeDasharray="1 3" strokeWidth="1" /></svg>;
const BarOptions = () => <svg width="6" height="14" viewBox="0 0 6 14"><path d="M0 0H6V2H0ZM0 9H6L3 12.500Z" fill="#fff" /></svg>;

const TrayUp = () => <svg width="8" height="5" viewBox="0 0 8 5"><path d="M4 0L8 4.500H0Z" fill="#fff" /></svg>;
const ShieldIcon = () => <svg width="16" height="16" viewBox="0 0 16 16"><rect x=".5" y=".5" width="15" height="15" rx="1" fill="#f09a20" stroke="#fac66a" /><path d="M3 4Q6 4 8 2.500Q10 4 13 4V8Q12 12 8 14Q4 12 3 8Z" fill="#fff" /><path d="M8 3V14M3 8H13" stroke="#f09a20" /></svg>;
const BatteryIcon = () => <svg width="16" height="16" viewBox="0 0 16 16"><path d="M6 1H10V3H12V15H4V3H6Z" fill="#1d2f50" stroke="#fff" strokeWidth="1.300" /><path d="M6 6H10V13H6Z" fill="#fff" /></svg>;
const SoundIcon = () => <svg width="16" height="16" viewBox="0 0 16 16"><path d="M1 5H4L8 1V15L4 11H1Z" fill="#f3f3f3" stroke="#333" strokeWidth=".6" /><circle cx="11" cy="11" r="4.500" fill="#de2020" /><path d="M8.500 9L13.500 13" stroke="#fff" strokeWidth="1.500" /></svg>;
const NetTrayIcon = () => <svg width="16" height="16" viewBox="0 0 16 16"><path d="M1 1V4H4V1M2.500 4V14H6M6 3H14V11H6" fill="none" stroke="#fff" strokeWidth="1.300" /><path d="M10.500 5L16 15.500H5Z" fill="#f8d21c" stroke="#8a7200" strokeWidth=".6" /><path d="M10.500 9V12.500M10.500 13.500V14.500" stroke="#000" strokeWidth="1.200" /></svg>;
const FlagIcon = () => <svg width="16" height="16" viewBox="0 0 16 16"><path d="M2 1V15" stroke="#fff" strokeWidth="1.300" /><path d="M3 2H8L9 4H14V11H8L7 9H3Z" fill="#fff" /><rect x="7" y="7" width="8.500" height="8.500" rx="2" fill="#de2020" /><path d="M9 9L13.500 13.500M13.500 9L9 13.500" stroke="#fff" strokeWidth="1.500" /></svg>;

/* ---------- data ---------- */

const status = [
  ["Serial Number", "1383"], ["Frequency", "3.0 MHz"], ["Beams", "128"], ["Samples", "1000"], ["Resolution", "8.7 mm"],
  ["Receiver Gain", "24 dB"], ["Range End", "11.18 m"], ["Focus", "2.65 m"], ["Range Start", "2.24 m"], ["Depth", "0.0 m"],
  ["Sonar Heading", "233°"], ["Sonar Pitch", "3.70°"], ["Sonar Roll", "2.50°"], ["X2 Pan", "NaN°"], ["X2 Tilt", "NaN°"],
  ["X2 Roll", "NaN°"], ["Sound Velocity", "1491 m/s"], ["Brackish Water", "19 °C"], ["Power Supply", "26 °C"], ["CPU", "25 °C"],
  ["Humidity", "0 %"], ["Input Power", "n/a"],
];
const connections = [
  { id: 1, name: "Cisco AnyConnect Secure Mobility Client Connection", lines: ["Disabled"], off: true },
  { id: 2, name: "Local Area Connection", lines: ["Unidentified network", "Intel(R) Ethernet Connection I218..."], selected: true },
  { id: 3, name: "", lines: [], failed: true },
  { id: 4, name: "Wireless Network Connection", lines: ["", "Intel(R) Dual Band Wireless-AC 72..."], failed: true, wifi: true },
  { id: 5, name: "Wireless Network Connection 2", lines: ["Not connected", "Microsoft Virtual WiFi Miniport A..."], failed: true, wifi: true },
  { id: 6, name: "Wireless Network Connection 3", lines: ["Not connected", "Microsoft Virtual WiFi Miniport A..."], failed: true, wifi: true },
];
const properties = ["Energy Efficient Ethernet", "Flow Control", "Jumbo Packet", "Link Speed Battery Saver", "Priority & VLAN", "Protocol ARP Offload", "Protocol NS Offload", "Speed & Duplex", "System Idle Power Saver", "Wake on Magic Packet", "Wake on Pattern Match"];
const commands = ["Disable this network device", "Diagnose this connection", "Rename this connection", "View status of this connection", "Change settings of this connection"];
const tabs = [["General", 48], ["Advanced", 64], ["Driver", 40], ["Details", 45], ["Power Management", 104]];

const LeftPanel = () => (
  <SidePanel $w={267}>
    <Scratches />
    <SectionBar as="div"><SectionIcon><SmallGear /></SectionIcon></SectionBar>
    <SectionBody $h={228}>
      <AutoButton>Auto</AutoButton>
      <FieldLabel $pad="11px 3px 0">Frame Rate</FieldLabel>
      <FieldLabel $pad="45px 3px 0">Gain</FieldLabel>
      <FieldLabel $pad="28px 3px 0">Detail</FieldLabel>
    </SectionBody>
    <SectionBar as="div"><SectionIcon><WrenchIcon /></SectionIcon></SectionBar>
    <SectionBody $h={193}>
      <FieldLabel $pad="0 3px 1px">Signal</FieldLabel>
      <SignalPlot />
      <Threshold type="range" min="0" max="100" defaultValue="0" aria-label="Threshold" />
      <FieldLabel as="div" $pad="1px 1px 7px">0.0 dB</FieldLabel>
      <CheckRow><DarkCheck type="checkbox" />Reverse</CheckRow>
      <CheckRow><DarkCheck type="checkbox" />Transmit</CheckRow>
      <CheckRow><DarkCheck type="checkbox" />Smooth</CheckRow>
    </SectionBody>
    <SectionBar as="div"><SectionIcon><FnIcon /></SectionIcon></SectionBar>
    <SectionBody $h={47} $pad="7px 0 0 10px">
      <ToolRow>
        <ToolButton aria-label="Pointer"><svg width="20" height="22" viewBox="0 0 20 22"><path d="M1 3H13V15L11 12M3 3L7 14 10 11M11 13L15 19" fill="none" stroke="#fff" strokeWidth="2" /></svg></ToolButton>
        <ToolButton aria-label="Measure"><svg width="16" height="20" viewBox="0 0 16 20"><path d="M1 17H13M10 14L14 17 10 20" stroke="#ddd" fill="none" strokeWidth="1.500" /></svg></ToolButton>
        <ToolButton aria-label="Grid"><svg width="10" height="20" viewBox="0 0 10 20"><path d="M2 5V18M5 5V18M8 5V18" stroke="#bbb" /></svg></ToolButton>
        <ToolButton aria-label="Mark"><svg width="8" height="20" viewBox="0 0 8 20"><path d="M4 4V18" stroke="#bbb" /></svg></ToolButton>
        <ToolButton aria-label="Region"><svg width="12" height="20" viewBox="0 0 12 20"><path d="M2 6H9V18H2Z" fill="#ddd" /></svg></ToolButton>
        <ToolButton aria-label="Zoom" $w={43} $ml={31}><svg width="12" height="18" viewBox="0 0 12 18"><path d="M1 16H4M8 16H11" stroke="#bbb" /></svg></ToolButton>
      </ToolRow>
    </SectionBody>
  </SidePanel>
);

const RightPanel = () => (
  <SidePanel $w={190}>
    <Scratches />
    <Expander aria-label="Expand"><svg width="8" height="14" viewBox="0 0 8 14"><path d="M1 1L6 7 1 13" fill="none" stroke="#ddd" strokeWidth="2.500" /></svg></Expander>
    <SectionBar><SectionIcon><FilterIcon /></SectionIcon>Master</SectionBar>
    <SpacerBar $h={5} />
    <SectionBar><SectionIcon><SignalIcon /></SectionIcon>Sonar Status</SectionBar>
    <SectionBody $h={482} $pad="1px 0 0">
      <StatusTable>
        <tbody>{status.map(([k, v]) => <tr key={k}><th scope="row">{k}</th><td>{v}</td></tr>)}</tbody>
      </StatusTable>
      <ShowHeaders>Show Headers</ShowHeaders>
    </SectionBody>
    <SectionBar><SectionIcon><ShipIcon /></SectionIcon>Platform Status</SectionBar>
  </SidePanel>
);

export default function App() {
  return (
    <Desktop>
      <Global />
      <TitleBar>
        <TitleText><WaveLogo size={15} pale />ARIS by Sound Metrics: See What Others Can't</TitleText>
        <Caption>
          <CaptionButton aria-label="Minimize"><Min /></CaptionButton>
          <CaptionButton aria-label="Restore"><Restore /></CaptionButton>
          <CaptionButton $wide aria-label="Close"><Cross /></CaptionButton>
        </Caption>
      </TitleBar>
      <AppHeader>
        <HeaderLeft>
          <LogoBox><WaveLogo size={48} /></LogoBox>
          <Arrow $w={25} aria-label="Previous">&lt;</Arrow>
          <DeviceTile><Connected>Connected</Connected><DeviceIcon />1383</DeviceTile>
          <Arrow $w={92} aria-label="Next">&gt;</Arrow>
        </HeaderLeft>
        <HeaderMenu>
          <MenuEntry>Files<FolderOutline /></MenuEntry>
          <MenuEntry>Settings<GearOutline /></MenuEntry>
          <MenuEntry>Help<HelpOutline /></MenuEntry>
        </HeaderMenu>
      </AppHeader>
      <AppBody>
        <LeftPanel />
        <SonarView>
          <ViewTools><ToolDot aria-label="Zoom in" /><ToolDot aria-label="Zoom out" /></ViewTools>
          <Sonar />
        </SonarView>
        <RightPanel />
      </AppBody>

      <ExplorerWindow>
        <WindowTop>
          <Caption $dark>
            <CaptionButton $dark aria-label="Minimize"><Min /></CaptionButton>
            <CaptionButton $dark aria-label="Maximize"><Max /></CaptionButton>
            <CaptionButton $dark $wide aria-label="Close"><Cross /></CaptionButton>
          </Caption>
        </WindowTop>
        <AddressRow>
          <NavButton aria-label="Back"><BackIcon /></NavButton>
          <NavButton aria-label="Forward"><ForwardIcon /></NavButton>
          <NavMenu aria-label="Recent pages"><RecentIcon /></NavMenu>
          <AddressBox>
            <NetFolderIcon /><Right />
            <Crumb href="#">Control Panel</Crumb><Right />
            <Crumb href="#">Network and Internet</Crumb><Right />
            <Crumb href="#">Network Connections</Crumb><Right />
            <AddressEnd><Down fill="#000040" /><Refresh aria-label="Refresh"><RefreshIcon /></Refresh></AddressEnd>
          </AddressBox>
          <SearchBox>
            <SearchInput type="text" placeholder="Search Network Connections" aria-label="Search Network Connections" />
            <SearchIcon />
          </SearchBox>
        </AddressRow>
        <Client>
          <Toolbar>
            <ToolbarButton>Organize<Down /></ToolbarButton>
            {commands.map((c) => <ToolbarButton key={c}>{c}</ToolbarButton>)}
            <ToolbarIcons>
              <ToolbarButton $gap={9} aria-label="Change your view"><ViewIcon /><Down /></ToolbarButton>
              <ToolbarButton aria-label="Preview pane"><PaneIcon /></ToolbarButton>
              <ToolbarButton aria-label="Get help"><HelpBall /></ToolbarButton>
            </ToolbarIcons>
          </Toolbar>
          <ItemGrid>
            {connections.map((c) => (
              <Item key={c.id} $selected={c.selected}>
                <NetworkIcon off={c.off} failed={c.failed} wifi={c.wifi} />
                <ItemText><ItemName>{c.name}</ItemName>{c.lines.map((l) => <p key={l}>{l}</p>)}</ItemText>
              </Item>
            ))}
          </ItemGrid>
        </Client>
      </ExplorerWindow>

      <Dialog role="dialog" aria-labelledby="dlg-title">
        <DialogTitle>
          <h2 id="dlg-title">Intel(R) Ethernet Connection I218-LM Properties</h2>
          <CloseButton aria-label="Close"><Cross /></CloseButton>
        </DialogTitle>
        <DialogClient>
          <Tabs role="tablist">
            {tabs.map(([t, w]) => <Tab key={t} role="tab" $w={w} $active={t === "Advanced"} aria-selected={t === "Advanced"}>{t}</Tab>)}
          </Tabs>
          <TabPage>
            <p>The following properties are available for this network adapter. Click the property you want to change on the left, and then select its value on the right.</p>
            <Columns>
              <Field $w={186}>
                <label htmlFor="property">Property:</label>
                <PropertyList id="property" size={14} defaultValue={properties[0]}>
                  {properties.map((p) => <option key={p} value={p}>{p}</option>)}
                </PropertyList>
              </Field>
              <Field $w={141}>
                <label htmlFor="value">Value:</label>
                <Combo>
                  <ComboSelect id="value" defaultValue="Off"><option>Off</option><option>On</option></ComboSelect>
                  <Down fill="#000" />
                </Combo>
              </Field>
            </Columns>
          </TabPage>
          <DialogButtons>
            <PushButton $primary>OK</PushButton>
            <PushButton>Cancel</PushButton>
          </DialogButtons>
        </DialogClient>
      </Dialog>

      <LanguageBar>
        <GripIcon />
        <LanguageButton $ml={9}><KeyboardIcon />German</LanguageButton>
        <LanguageButton $ml={11}><HelpBall />Help</LanguageButton>
        <LanguageButton $ml={13} aria-label="Options"><BarOptions /></LanguageButton>
      </LanguageBar>

      <Taskbar>
        <StartButton aria-label="Start"><StartOrb /></StartButton>
        <TaskButtons>
          <span />
          <TaskButton aria-label="Firefox"><Firefox /></TaskButton>
          <TaskButton aria-label="Explorer" $open $stacked><ExplorerIcon /></TaskButton>
          <TaskButton aria-label="Excel"><OfficeIcon letter="X" dark="#107c41" c={["#33c481", "#21a366", "#107c41", "#185c37"]} /></TaskButton>
          <TaskButton aria-label="OneNote"><OfficeIcon letter="N" dark="#7719aa" c={["#ca64ea"]} /></TaskButton>
          <TaskButton aria-label="Outlook"><OfficeIcon letter="O" dark="#0f6cbd" c={["#0364b8", "#0a84e0"]} /></TaskButton>
          <TaskButton aria-label="PowerPoint"><OfficeIcon letter="P" dark="#c43e1c" c={["#ed6c47", "#ff8f6b", "#d35230"]} /></TaskButton>
          <TaskButton aria-label="Word"><OfficeIcon letter="W" dark="#185abd" c={["#41a5ee", "#2b7cd3", "#185abd", "#103f91"]} /></TaskButton>
          <TaskButton aria-label="Edge" $open><EdgeIcon /></TaskButton>
          <TaskButton aria-label="Acrobat" $open><AcrobatIcon /></TaskButton>
          <TaskButton aria-label="Control Panel" $open $stacked $active><ControlPanelIcon /></TaskButton>
          <TaskButton aria-label="ARIS" $open><WaveLogo size={32} pale /></TaskButton>
        </TaskButtons>
        <Tray>
          <TrayIcons><TrayToggle aria-label="Show hidden icons"><TrayUp /></TrayToggle><ShieldIcon /><BatteryIcon /><SoundIcon /><NetTrayIcon /><FlagIcon /></TrayIcons>
          <Clock>7:05 PM<br />4/13/2025</Clock>
          <ShowDesktop aria-label="Show desktop" />
        </Tray>
      </Taskbar>
    </Desktop>
  );
}
